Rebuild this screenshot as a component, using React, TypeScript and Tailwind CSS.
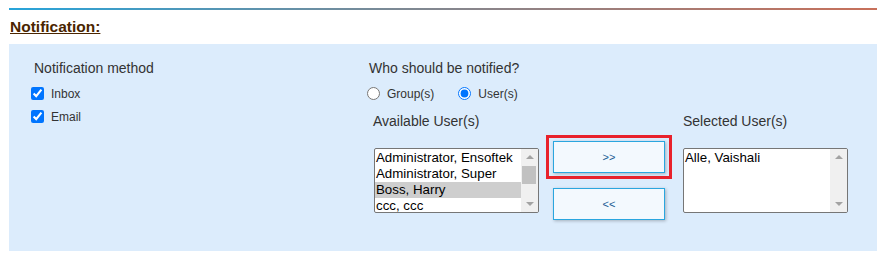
import React from "react";

const font = { fontFamily: '"Liberation Sans", Arial, sans-serif' };

function ScrollBar({ thumb }: { thumb: boolean }) {
  return (
    <div className="relative h-full w-[17px] shrink-0 bg-[#f0f0f0]">
      <div className="absolute left-[5px] top-[6px] h-0 w-0 border-x-[4px] border-b-[4px] border-x-transparent border-b-[#a3a3a3]" />
      {thumb && <div className="absolute left-[1px] top-[17px] h-[18px] w-[14px] bg-[#c1c1c1]" />}
      <div className="absolute bottom-[6px] left-[5px] h-0 w-0 border-x-[4px] border-t-[4px] border-x-transparent border-t-[#a3a3a3]" />
    </div>
  );
}

function ListBox({ items, selected, thumb }: { items: string[]; selected?: number; thumb: boolean }) {
  return (
    <div className="flex h-[65px] w-[165px] overflow-hidden rounded-[2px] border border-[#767676] bg-white">
      <div className="flex-1 overflow-hidden pt-[1px]">
        {items.map((it, i) => (
          <div
            key={it}
            className={`h-[16px] whitespace-nowrap pl-[1px] text-[13.3px] leading-[16px] text-black ${i === selected ? "bg-[#cecece]" : ""}`}
          >
            {it}
          </div>
        ))}
      </div>
      <ScrollBar thumb={thumb} />
    </div>
  );
}

function MoveButton({ label }: { label: string }) {
  return (
    <button className="h-[32px] w-[112px] border border-[#2aa6df] bg-[#f3f9fe] text-[11px] text-[#1a5c94] shadow-[1px_1px_3px_rgba(0,0,0,0.25)]">
      {label}
    </button>
  );
}

export default function App() {
  return (
    <div className="min-h-[254px] w-[877px] bg-white" style={font}>
      <div className="ml-[9px] pt-[8px]">
        <div className="h-[2px] w-full bg-[linear-gradient(to_right,#27a4da,#7d8994_45%,#c8705a)]" />
        <div className="mt-[8px] pl-[1px] text-[15.5px] font-bold leading-[18px] text-[#4a2500] underline">
          Notification:
        </div>
        <div className="mt-[8px] flex bg-[#dcecfc] pb-[31px] pl-[22px] pt-[16px] text-[#333333]">
          <div className="w-[336px] shrink-0">
            <div className="ml-[3px] text-[14px] leading-[16px]">Notification method</div>
            <label className="mt-[11px] flex h-[13px] items-center">
              <input type="checkbox" defaultChecked className="h-[13px] w-[13px]" />
              <span className="ml-[7px] text-[12px] leading-[14px]">Inbox</span>
            </label>
            <label className="mt-[10px] flex h-[13px] items-center">
              <input type="checkbox" defaultChecked className="h-[13px] w-[13px]" />
              <span className="ml-[7px] text-[12px] leading-[14px]">Email</span>
            </label>
          </div>
          <div>
            <div className="ml-[2px] text-[14px] leading-[16px]">Who should be notified?</div>
            <div className="mt-[11px] flex h-[13px] items-center">
              <input type="radio" name="who" className="h-[13px] w-[13px]" />
              <span className="ml-[7px] mr-[24px] text-[12px] leading-[14px]">Group(s)</span>
              <input type="radio" name="who" defaultChecked className="h-[13px] w-[13px]" />
              <span className="ml-[7px] text-[12px] leading-[14px]">User(s)</span>
            </div>
            <div className="mt-[13px] flex items-start">
              <div className="ml-[6px]">
                <div className="text-[14px] leading-[16px]">Available User(s)</div>
                <div className="ml-[1px] mt-[19px]">
                  <ListBox
                    items={["Administrator, Ensoftek", "Administrator, Super", "Boss, Harry", "ccc, ccc"]}
                    selected={2}
                    thumb
                  />
                </div>
              </div>
              <div className="ml-[7px] mt-[22px] flex flex-col">
                <div className="border-[3px] border-[#e8212b] px-[4px] py-[3px]">
                  <MoveButton label=">>" />
                </div>
                <div className="ml-[7px] mt-[9px]">
                  <MoveButton label="<<" />
                </div>
              </div>
              <div className="ml-[11px]">
                <div className="text-[14px] leading-[16px]">Selected User(s)</div>
                <div className="mt-[19px]">
                  <ListBox items={["Alle, Vaishali"]} thumb={false} />
                </div>
              </div>
            </div>
          </div>
        </div>
      </div>
    </div>
  );
}
